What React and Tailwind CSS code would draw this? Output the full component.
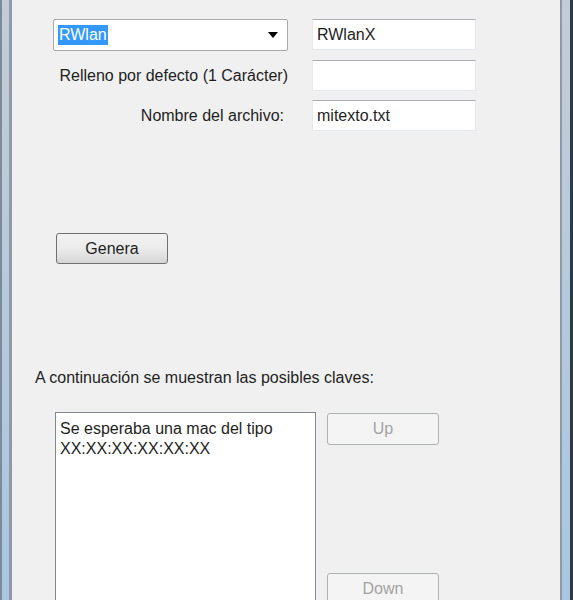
const font = { fontFamily: '"Liberation Sans", Arial, sans-serif' };

const TextBox = ({ value }) => (
  <div className="h-[31px] w-[164px] bg-white border border-[#e3e9ef] border-t-[#abadb3] flex items-center px-[4px] text-[16px] text-[#1e1e1e]">
    {value}
  </div>
);

const Button = ({ children, disabled, className = '' }) => (
  <div
    className={
      'h-[31px] w-[112px] rounded-[3px] border flex items-center justify-center text-[16px] ' +
      (disabled
        ? 'border-[#adb2b5] bg-[#f4f4f4] text-[#a3a3a3] '
        : 'border-[#707070] bg-gradient-to-b from-[#f2f2f2] via-[#ebebeb] to-[#d6d6d6] text-[#1e1e1e] ') +
      className
    }
  >
    {children}
  </div>
);

export default function App() {
  return (
    <div className="flex w-[573px] h-[600px] overflow-hidden bg-[#f0f0f0]" style={font}>
      {/* left window frame */}
      <div className="flex shrink-0">
        <div className="w-[2px] bg-[#7d8b98]" />
        <div className="w-[7px] bg-gradient-to-b from-[#c3ccd6] to-[#a9c6e2]" />
        <div className="w-[3px] bg-[#8e9aa6]" />
      </div>

      <div className="flex-1 flex flex-col text-[#1e1e1e] text-[16px]">
        <div className="pl-[41px] pt-[19px] flex flex-col gap-[9px]">
          <div className="flex gap-[24px]">
            <div className="h-[32px] w-[235px] bg-white border border-[#a9a9a9] rounded-[2px] flex items-center pl-[4px] pr-[9px]">
              <span className="bg-[#3399ff] text-white px-[1px] leading-[20px]">RWlan</span>
              <span className="ml-auto w-0 h-0 border-l-[5px] border-r-[5px] border-t-[6px] border-l-transparent border-r-transparent border-t-black" />
            </div>
            <TextBox value="RWlanX" />
          </div>
          <div className="flex gap-[24px] items-center">
            <div className="w-[235px] text-right">Relleno por defecto (1 Carácter)</div>
            <TextBox value="" />
          </div>
          <div className="flex gap-[24px] items-center">
            <div className="w-[235px] text-right pr-[4px]">Nombre del archivo:</div>
            <TextBox value="mitexto.txt" />
          </div>
        </div>

        <div className="pl-[44px] mt-[102px]">
          <Button>Genera</Button>
        </div>

        <div className="pl-[23px] mt-[105px] leading-[18px]">
          A continuación se muestran las posibles claves:
        </div>

        <div className="pl-[43px] mt-[25px] flex gap-[11px] items-start">
          <div className="w-[261px] h-[200px] bg-white border border-[#828790] border-b-0 px-[4px] pt-[6px] leading-[20px]">
            <div>Se esperaba una mac del tipo</div>
            <div>XX:XX:XX:XX:XX:XX</div>
          </div>
          <div className="flex flex-col gap-[128px] pt-[1px]">
            <Button disabled className="h-[32px]">Up</Button>
            <Button disabled>Down</Button>
          </div>
        </div>
      </div>

      {/* right window frame */}
      <div className="flex shrink-0">
        <div className="w-[2px] bg-[#8e9aa6]" />
        <div className="w-[8px] bg-gradient-to-b from-[#c3ccd6] to-[#a9c6e2]" />
        <div className="w-[3px] bg-[#2c3a45]" />
      </div>
    </div>
  );
}
